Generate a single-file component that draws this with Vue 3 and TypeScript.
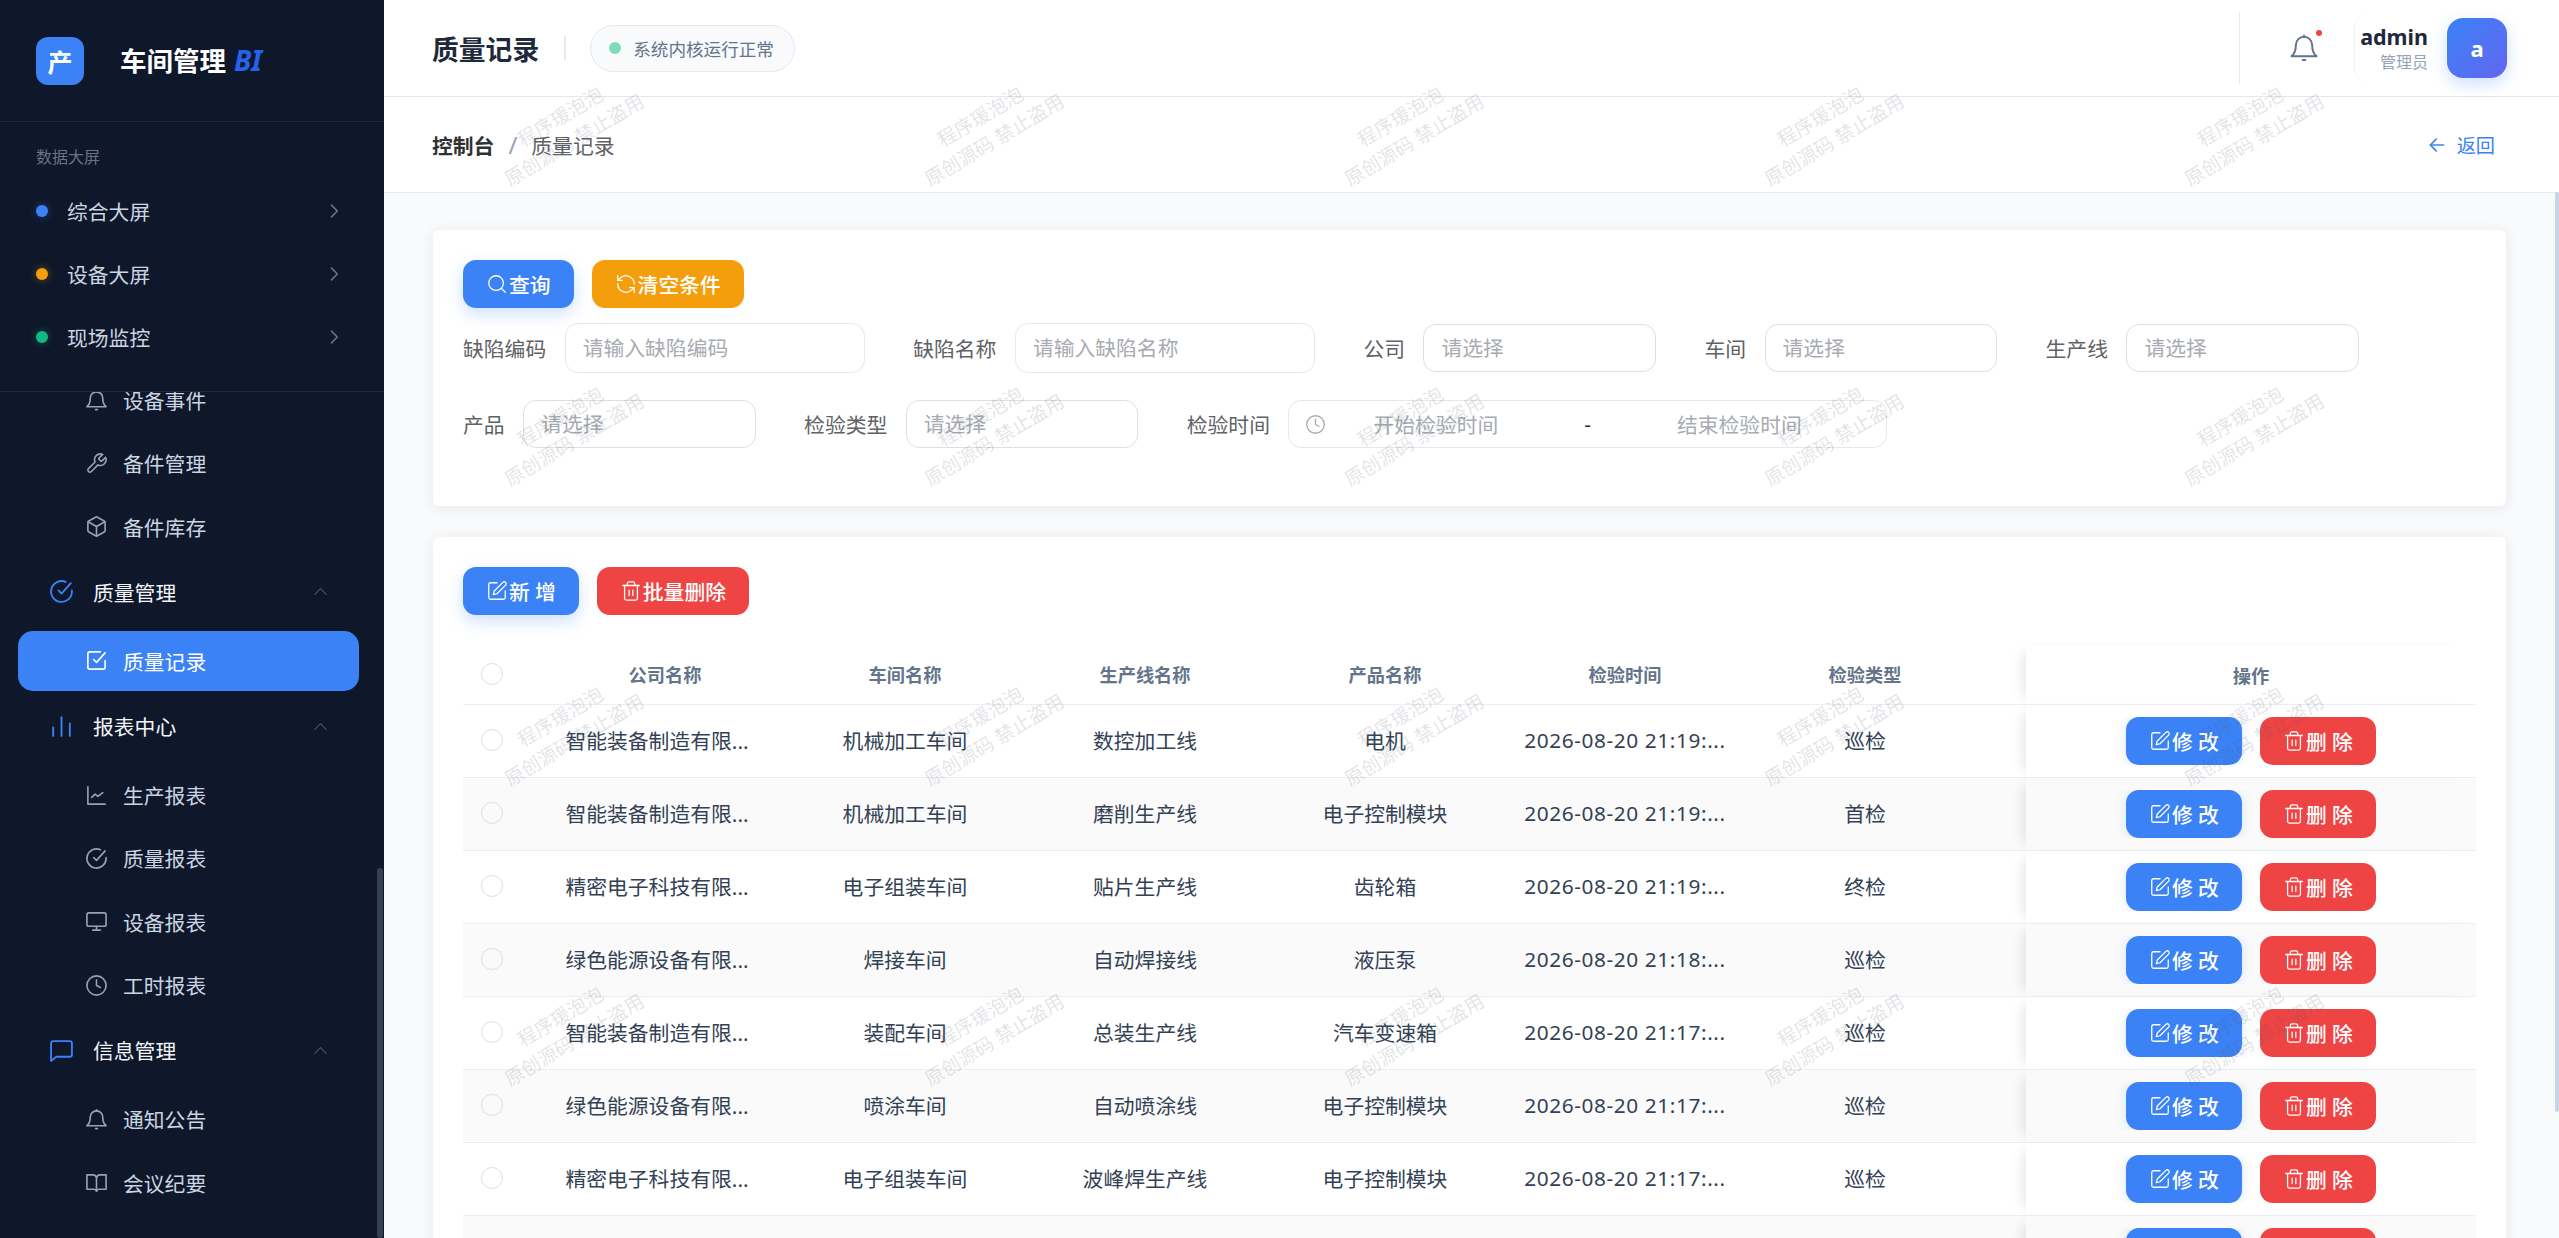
<script setup lang="ts">
import { h, type FunctionalComponent } from 'vue'

const icons: Record<string, string[]> = {
  bell: ['M12 3a6.5 6.5 0 0 0-6.5 6.5c0 5.5-1.5 7.5-3.5 9h20c-2-1.5-3.5-3.5-3.5-9A6.5 6.5 0 0 0 12 3z', 'M12 3V2', 'M11 21.5h2'],
  wrench: ['M14.7 6.3a1 1 0 0 0 0 1.4l1.6 1.6a1 1 0 0 0 1.4 0l3.77-3.77a6 6 0 0 1-7.94 7.94l-6.91 6.91a2.12 2.12 0 0 1-3-3l6.91-6.91a6 6 0 0 1 7.94-7.94l-3.76 3.76z'],
  box: ['M21 8a2 2 0 0 0-1-1.73l-7-4a2 2 0 0 0-2 0l-7 4A2 2 0 0 0 3 8v8a2 2 0 0 0 1 1.73l7 4a2 2 0 0 0 2 0l7-4A2 2 0 0 0 21 16Z', 'M3.3 7 12 12l8.7-5', 'M12 22V12'],
  checkCircle: ['M22 11.08V12a10 10 0 1 1-5.93-9.14', 'M21 4 12 14l-3-3'],
  checkSquare: ['M9 11l3 3L21 4', 'M21 12v7a2 2 0 0 1-2 2H5a2 2 0 0 1-2-2V5a2 2 0 0 1 2-2h11'],
  bars: ['M4 21v-8', 'M12 21V3', 'M20 21V9'],
  chart: ['M3 3v18h18', 'M7 14l3.5-3.5 3 2.5 5-4'],
  monitor: ['M4 3h16a2 2 0 0 1 2 2v10a2 2 0 0 1-2 2H4a2 2 0 0 1-2-2V5a2 2 0 0 1 2-2z', 'M8 21h8', 'M12 17v4'],
  clock: ['M12 2a10 10 0 1 0 0 20 10 10 0 0 0 0-20z', 'M12 6v6l4 2'],
  message: ['M2 22V5a2 2 0 0 1 2-2h16a2 2 0 0 1 2 2v11a2 2 0 0 1-2 2H7z'],
  book: ['M2 4h6a4 4 0 0 1 4 3 4 4 0 0 1 4-3h6v15h-7a3 3 0 0 0-3 2 3 3 0 0 0-3-2H2z', 'M12 7v14'],
  search: ['M11 3a8 8 0 1 0 0 16 8 8 0 0 0 0-16z', 'M21 21l-4.3-4.3'],
  refresh: ['M21 12a9 9 0 0 0-15-6.7L3 8', 'M3 3v5h5', 'M3 12a9 9 0 0 0 15 6.7l3-2.7', 'M16 16h5v5'],
  edit: ['M12 3H5a2 2 0 0 0-2 2v14a2 2 0 0 0 2 2h14a2 2 0 0 0 2-2v-7', 'M18.4 2.6a2.1 2.1 0 1 1 3 3L12 15l-4 1 1-4z'],
  trash: ['M3 6h18', 'M19 6v14a2 2 0 0 1-2 2H7a2 2 0 0 1-2-2V6', 'M8 6V4a2 2 0 0 1 2-2h4a2 2 0 0 1 2 2v2', 'M10 11v6', 'M14 11v6'],
  left: ['M20 12H4', 'M11 19l-7-7 7-7'],
  right: ['M9 5l7 7-7 7'],
  up: ['M4 16l8-8 8 8'],
}

const Icon: FunctionalComponent<{ name: string }> = (props) =>
  h(
    'svg',
    { viewBox: '0 0 24 24', fill: 'none', stroke: 'currentColor', 'stroke-width': 2, 'stroke-linecap': 'round', 'stroke-linejoin': 'round' },
    icons[props.name].map((d) => h('path', { d })),
  )

const screens = [
  { label: '综合大屏', color: 'blue' },
  { label: '设备大屏', color: 'amber' },
  { label: '现场监控', color: 'green' },
]

type MenuRow = { label: string; icon: string; group?: boolean; active?: boolean }
const menu: MenuRow[] = [
  { label: '设备事件', icon: 'bell' },
  { label: '备件管理', icon: 'wrench' },
  { label: '备件库存', icon: 'box' },
  { label: '质量管理', icon: 'checkCircle', group: true },
  { label: '质量记录', icon: 'checkSquare', active: true },
  { label: '报表中心', icon: 'bars', group: true },
  { label: '生产报表', icon: 'chart' },
  { label: '质量报表', icon: 'checkCircle' },
  { label: '设备报表', icon: 'monitor' },
  { label: '工时报表', icon: 'clock' },
  { label: '信息管理', icon: 'message', group: true },
  { label: '通知公告', icon: 'bell' },
  { label: '会议纪要', icon: 'book' },
]

const heads = ['公司名称', '车间名称', '生产线名称', '产品名称', '检验时间', '检验类型']
const rows = [
  ['智能装备制造有限...', '机械加工车间', '数控加工线', '电机', '2026-08-20 21:19:...', '巡检'],
  ['智能装备制造有限...', '机械加工车间', '磨削生产线', '电子控制模块', '2026-08-20 21:19:...', '首检'],
  ['精密电子科技有限...', '电子组装车间', '贴片生产线', '齿轮箱', '2026-08-20 21:19:...', '终检'],
  ['绿色能源设备有限...', '焊接车间', '自动焊接线', '液压泵', '2026-08-20 21:18:...', '巡检'],
  ['智能装备制造有限...', '装配车间', '总装生产线', '汽车变速箱', '2026-08-20 21:17:...', '巡检'],
  ['绿色能源设备有限...', '喷涂车间', '自动喷涂线', '电子控制模块', '2026-08-20 21:17:...', '巡检'],
  ['精密电子科技有限...', '电子组装车间', '波峰焊生产线', '电子控制模块', '2026-08-20 21:17:...', '巡检'],
]
const marks = Array.from({ length: 20 }, (_, i) => i)
</script>

<template>
  <div class="page">
    <aside class="side">
      <div class="brand">
        <div class="logo">产</div>
        <div class="brand-name">车间管理 <em>BI</em></div>
      </div>
      <div class="screens">
        <div class="screens-title">数据大屏</div>
        <div v-for="s in screens" :key="s.label" class="screen">
          <span class="dot" :class="s.color"></span>
          <span>{{ s.label }}</span>
          <Icon name="right" class="screen-arrow" />
        </div>
      </div>
      <nav class="menu">
        <div
          v-for="m in menu"
          :key="m.label"
          :class="m.group ? 'group' : m.active ? 'sub active' : 'sub'"
        >
          <Icon :name="m.icon" class="menu-icon" />
          <span>{{ m.label }}</span>
          <Icon v-if="m.group" name="up" class="group-arrow" />
        </div>
      </nav>
      <div class="side-thumb"></div>
    </aside>

    <div class="content">
      <header class="top">
        <h1>质量记录</h1>
        <span class="top-sep"></span>
        <div class="status"><i></i>系统内核运行正常</div>
        <div class="top-right">
          <div class="bell">
            <Icon name="bell" class="bell-icon" />
            <i></i>
          </div>
          <div class="user">
            <div class="user-text">
              <b>admin</b>
              <small>管理员</small>
            </div>
            <div class="avatar">a</div>
          </div>
        </div>
      </header>

      <div class="crumbs">
        <b>控制台</b>
        <span class="slash">/</span>
        <span>质量记录</span>
        <a class="back"><Icon name="left" class="back-icon" />返回</a>
      </div>

      <main class="body">
        <section class="card filter">
          <div class="actions">
            <button class="btn blue glow"><Icon name="search" />查询</button>
            <button class="btn amber"><Icon name="refresh" />清空条件</button>
          </div>
          <div class="form-row first">
            <label>缺陷编码</label>
            <input class="field wide" placeholder="请输入缺陷编码" />
            <label>缺陷名称</label>
            <input class="field wide" placeholder="请输入缺陷名称" />
            <label>公司</label>
            <input class="field select" placeholder="请选择" />
            <label>车间</label>
            <input class="field select" placeholder="请选择" />
            <label>生产线</label>
            <input class="field select" placeholder="请选择" />
          </div>
          <div class="form-row">
            <label>产品</label>
            <input class="field select" placeholder="请选择" />
            <label>检验类型</label>
            <input class="field select" placeholder="请选择" />
            <label>检验时间</label>
            <div class="range">
              <Icon name="clock" class="range-icon" />
              <span class="range-start">开始检验时间</span>
              <span class="range-dash">-</span>
              <span class="range-end">结束检验时间</span>
            </div>
          </div>
        </section>

        <section class="card list">
          <div class="actions">
            <button class="btn blue glow"><Icon name="edit" /><span class="pair">新增</span></button>
            <button class="btn red"><Icon name="trash" />批量删除</button>
          </div>
          <div class="table">
            <div class="tr thead">
              <div class="td check"><span class="box"></span></div>
              <div v-for="t in heads" :key="t" class="td">{{ t }}</div>
              <div class="td"></div>
              <div class="td op">操作</div>
            </div>
            <div v-for="(r, i) in rows" :key="i" class="tr" :class="{ stripe: i % 2 === 1 }">
              <div class="td check"><span class="box"></span></div>
              <div v-for="(c, j) in r" :key="j" class="td" :class="{ company: j === 0, time: j === 4 }">{{ c }}</div>
              <div class="td"></div>
              <div class="td op">
                <div class="op-inner">
                  <button class="btn blue soft"><Icon name="edit" /><span class="pair">修改</span></button>
                  <button class="btn red"><Icon name="trash" /><span class="pair">删除</span></button>
                </div>
              </div>
            </div>
            <div class="tr stripe partial">
              <div class="td"></div>
              <div class="td wide-empty"></div>
              <div class="td op">
                <div class="op-inner">
                  <button class="btn blue soft" aria-label="修改"></button>
                  <button class="btn red" aria-label="删除"></button>
                </div>
              </div>
            </div>
          </div>
        </section>
      </main>
      <div class="main-thumb"></div>
    </div>

    <div class="marks">
      <div v-for="n in marks" :key="n" class="mark">
        <span>程序瑗泡泡</span>
        <span>原创源码 禁止盗用</span>
      </div>
    </div>
  </div>
</template>

<style>
html,
body {
  margin: 0;
  overflow: hidden;
}
</style>

<style scoped>
.page {
  position: relative;
  display: flex;
  width: 2559px;
  height: 1238px;
  overflow: hidden;
  font-family: "Noto Sans", "Noto Sans CJK SC", sans-serif;
  font-size: 20.8px;
  background: #f8fafc;
}
svg {
  display: block;
  flex: none;
}

/* sidebar */
.side {
  position: relative;
  display: flex;
  flex-direction: column;
  width: 384px;
  flex: none;
  background: #0f172a;
  overflow: hidden;
}
.brand {
  display: flex;
  align-items: center;
  height: 122px;
  flex: none;
  padding-left: 36px;
  box-sizing: border-box;
  border-bottom: 1px solid #1e293b;
}
.logo {
  display: flex;
  align-items: center;
  justify-content: center;
  width: 48px;
  height: 48px;
  border-radius: 12px;
  background: #3b82f6;
  color: #fff;
  font-size: 25px;
  font-weight: 700;
}
.brand-name {
  margin-left: 36px;
  color: #fff;
  font-size: 26.5px;
  font-weight: 700;
  line-height: 1;
}
.brand-name em {
  margin-left: 1px;
  color: #2563eb;
  font-size: 28px;
  font-style: italic;
}
.screens {
  flex: none;
  height: 270px;
  box-sizing: border-box;
  border-bottom: 1px solid #1e293b;
}
.screens-title {
  padding: 24px 0 0 36px;
  height: 58px;
  box-sizing: border-box;
  color: #64748b;
  font-size: 16px;
  line-height: 22px;
}
.screen {
  display: flex;
  align-items: center;
  height: 63px;
  margin-top: -1px;
  margin-bottom: 1px;
  padding-left: 36px;
  color: #cbd5e1;
}
.dot {
  width: 12px;
  height: 12px;
  margin-right: 19px;
  border-radius: 50%;
}
.dot.blue {
  background: #3b82f6;
  box-shadow: 0 0 8px rgba(59, 130, 246, 0.4);
}
.dot.amber {
  background: #f59e0b;
  box-shadow: 0 0 8px rgba(245, 158, 11, 0.4);
}
.dot.green {
  background: #10b981;
  box-shadow: 0 0 8px rgba(16, 185, 129, 0.4);
}
.screen-arrow {
  width: 20px;
  height: 20px;
  margin-left: auto;
  margin-right: 40px;
  color: #64748b;
}
.menu {
  flex: 1;
  min-height: 0;
  overflow: hidden;
}
.sub {
  display: flex;
  align-items: center;
  height: 60px;
  margin: 0 25px 3.3px 18px;
  padding-left: 67px;
  border-radius: 15px;
  color: #cbd5e1;
}
.sub:first-child {
  margin-top: -22px;
}
.sub .menu-icon {
  width: 23px;
  height: 23px;
  margin-right: 15px;
  color: #94a3b8;
  stroke-width: 1.7;
}
.sub.active {
  background: #3b82f6;
  color: #fff;
}
.sub.active .menu-icon {
  color: #fff;
}
.group {
  display: flex;
  align-items: center;
  height: 64px;
  margin-bottom: 7px;
  padding: 0 55px 0 49px;
  color: #f1f5f9;
}
.group .menu-icon {
  width: 25px;
  height: 25px;
  margin-right: 19px;
  color: #3b82f6;
  stroke-width: 1.8;
}
.group-arrow {
  width: 17px;
  height: 17px;
  margin-left: auto;
  color: #475569;
  stroke-width: 1.5;
}
.side-thumb {
  position: absolute;
  right: 1px;
  top: 868px;
  bottom: 0;
  width: 6px;
  border-radius: 3px;
  background: #334155;
}

/* main column */
.content {
  position: relative;
  flex: 1;
  min-width: 0;
  display: flex;
  flex-direction: column;
}
.top {
  display: flex;
  align-items: center;
  flex: none;
  height: 97px;
  box-sizing: border-box;
  padding: 0 52px 0 48px;
  background: #fff;
  border-bottom: 1px solid #e2e8f0;
}
.top h1 {
  margin: 0;
  color: #1e293b;
  font-size: 26.8px;
  font-weight: 700;
}
.top-sep {
  width: 2px;
  height: 24px;
  margin: 0 24px 0 25px;
  background: #e2e8f0;
}
.status {
  display: flex;
  align-items: center;
  height: 47px;
  box-sizing: border-box;
  padding: 0 20px 0 18px;
  border: 1px solid #e2e8f0;
  border-radius: 24px;
  background: #f8fafc;
  color: #64748b;
  font-size: 17.6px;
}
.status i {
  width: 12px;
  height: 12px;
  margin-right: 12px;
  border-radius: 50%;
  background: #7fdcb8;
}
.top-right {
  display: flex;
  align-items: center;
  margin-left: auto;
  height: 72px;
}
.bell {
  position: relative;
  display: flex;
  align-items: center;
  width: 115px;
  height: 72px;
  box-sizing: border-box;
  padding-left: 49px;
  border-left: 1px solid #e2e8f0;
}
.bell-icon {
  width: 30px;
  height: 30px;
  color: #64748b;
  stroke-width: 1.6;
}
.bell i {
  position: absolute;
  left: 76px;
  top: 18px;
  width: 6px;
  height: 6px;
  border-radius: 50%;
  background: #ef4444;
}
.user {
  display: flex;
  align-items: center;
  height: 72px;
  box-sizing: border-box;
  padding-left: 8px;
  border-left: 1px solid #eef2f6;
  border-radius: 16px 0 0 16px;
}
.user-text {
  display: flex;
  flex-direction: column;
  align-items: flex-end;
  width: 65px;
  margin-right: 19px;
}
.user-text b {
  color: #1e293b;
  font-size: 21.5px;
  font-weight: 700;
  line-height: 28px;
}
.user-text small {
  color: #94a3b8;
  font-size: 16px;
  line-height: 22px;
}
.avatar {
  display: flex;
  align-items: center;
  justify-content: center;
  width: 60px;
  height: 60px;
  border-radius: 16px;
  background: linear-gradient(135deg, #3b82f6, #6366f1);
  box-shadow: 0 6px 16px rgba(59, 130, 246, 0.25);
  color: #fff;
  font-size: 22px;
  font-weight: 700;
}
.crumbs {
  display: flex;
  align-items: center;
  flex: none;
  height: 96px;
  box-sizing: border-box;
  padding: 0 64px 0 48px;
  background: #fff;
  border-bottom: 1px solid #e2e8f0;
  color: #606266;
}
.crumbs b {
  color: #303133;
  font-weight: 700;
}
.slash {
  margin: 0 14px;
  color: #94a3b8;
  font-size: 24px;
}
.back {
  display: flex;
  align-items: center;
  margin-left: auto;
  color: #3b82f6;
  font-size: 19.2px;
}
.back-icon {
  width: 20px;
  height: 20px;
  margin-right: 10px;
}
.main-thumb {
  position: absolute;
  right: 0;
  top: 192px;
  width: 4px;
  height: 920px;
  border-radius: 2px;
  background: #cbd5e1;
}
.body {
  flex: 1;
  min-height: 0;
  overflow: hidden;
  padding: 37px 53px 0 49px;
}
.card {
  padding: 30px;
  border-radius: 6px;
  background: #fff;
  box-shadow: 0 2px 14px rgba(15, 23, 42, 0.08);
}
.filter {
  height: 276px;
  box-sizing: border-box;
  margin-bottom: 31px;
}
.actions {
  display: flex;
  gap: 18px;
}
.btn {
  display: inline-flex;
  align-items: center;
  justify-content: center;
  gap: 1px;
  height: 48px;
  padding: 0 23px;
  border: 0;
  border-radius: 13px;
  color: #fff;
  font: 500 20.8px "Noto Sans", "Noto Sans CJK SC", sans-serif;
}
.btn svg {
  width: 22px;
  height: 22px;
  stroke-width: 1.4;
}
.btn.blue {
  background: #3b82f6;
}
.btn.amber {
  background: #f59e0b;
}
.btn.red {
  background: #ef4444;
}
.btn.glow {
  box-shadow: 0 6px 16px rgba(59, 130, 246, 0.25);
}
.btn.soft {
  box-shadow: 0 0 12px rgba(59, 130, 246, 0.2);
}
.pair {
  letter-spacing: 0.25em;
  margin-right: -0.25em;
}
.form-row {
  display: flex;
  align-items: center;
  height: 50px;
  margin-top: 26px;
}
.form-row.first {
  margin-top: 15px;
}
.form-row label {
  margin-right: 18.5px;
  color: #606266;
  white-space: nowrap;
}
.field {
  box-sizing: border-box;
  margin-right: 48.5px;
  padding: 0 17px;
  border: 1px solid #e4e7ed;
  border-radius: 13px;
  background: transparent;
  outline: 0;
  color: #606266;
  font: 20.8px "Noto Sans", "Noto Sans CJK SC", sans-serif;
}
.field::placeholder {
  color: #a8abb2;
}
.field.wide {
  width: 300px;
  height: 50px;
}
.field.select {
  width: 232.5px;
  height: 48px;
  border-color: #dcdfe6;
}
.range {
  display: flex;
  align-items: center;
  width: 599px;
  height: 48px;
  box-sizing: border-box;
  border: 1px solid #e4e7ed;
  border-radius: 13px;
  color: #a8abb2;
}
.range-icon {
  width: 21px;
  height: 21px;
  margin-left: 16px;
  stroke-width: 1.5;
}
.range-start {
  margin-left: 47px;
}
.range-dash {
  margin-left: 86px;
  color: #303133;
}
.range-end {
  margin-left: 86px;
}

/* table */
.list {
  padding-bottom: 0;
}
.table {
  margin-top: 30px;
}
.tr {
  display: grid;
  grid-template-columns: 82px repeat(6, 240px) 1fr 450px;
  height: 73px;
  color: #334155;
}
.td {
  display: flex;
  align-items: center;
  justify-content: center;
  box-sizing: border-box;
  padding-bottom: 2px;
  border-bottom: 1px solid #ebeef5;
  white-space: nowrap;
}
.td.op {
  padding-bottom: 0;
}
.td.company {
  padding-right: 16px;
}
.td.time {
  letter-spacing: 0.6px;
}
.thead {
  height: 60px;
  color: #64748b;
  font-size: 18.2px;
  font-weight: 700;
}
.stripe .td {
  background: #fafafa;
}
.check {
  justify-content: flex-start;
  padding-left: 18px;
}
.box {
  width: 20px;
  height: 20px;
  border: 1px solid #dcdfe6;
  border-radius: 50%;
}
.op {
  position: relative;
  background: #fff;
  box-shadow: -10px 0 12px -8px rgba(15, 23, 42, 0.12);
}
.stripe .op {
  background: #fafafa;
}
.op-inner {
  display: flex;
  gap: 18px;
  height: 48px;
  padding: 0 16px;
  overflow: hidden;
}
.op-inner .btn {
  width: 116px;
  padding: 0;
}
.partial {
  grid-template-columns: 82px 1fr 450px;
}

/* watermark grid */
.marks {
  position: absolute;
  left: 357px;
  top: -22px;
  display: grid;
  grid-template-columns: repeat(5, 420px);
  grid-auto-rows: 300px;
  pointer-events: none;
}
.mark {
  display: flex;
  flex-direction: column;
  align-items: center;
  justify-content: center;
  color: rgba(71, 85, 105, 0.17);
  font-size: 19.2px;
  line-height: 27px;
  transform: rotate(-31deg);
  white-space: nowrap;
}
</style>
